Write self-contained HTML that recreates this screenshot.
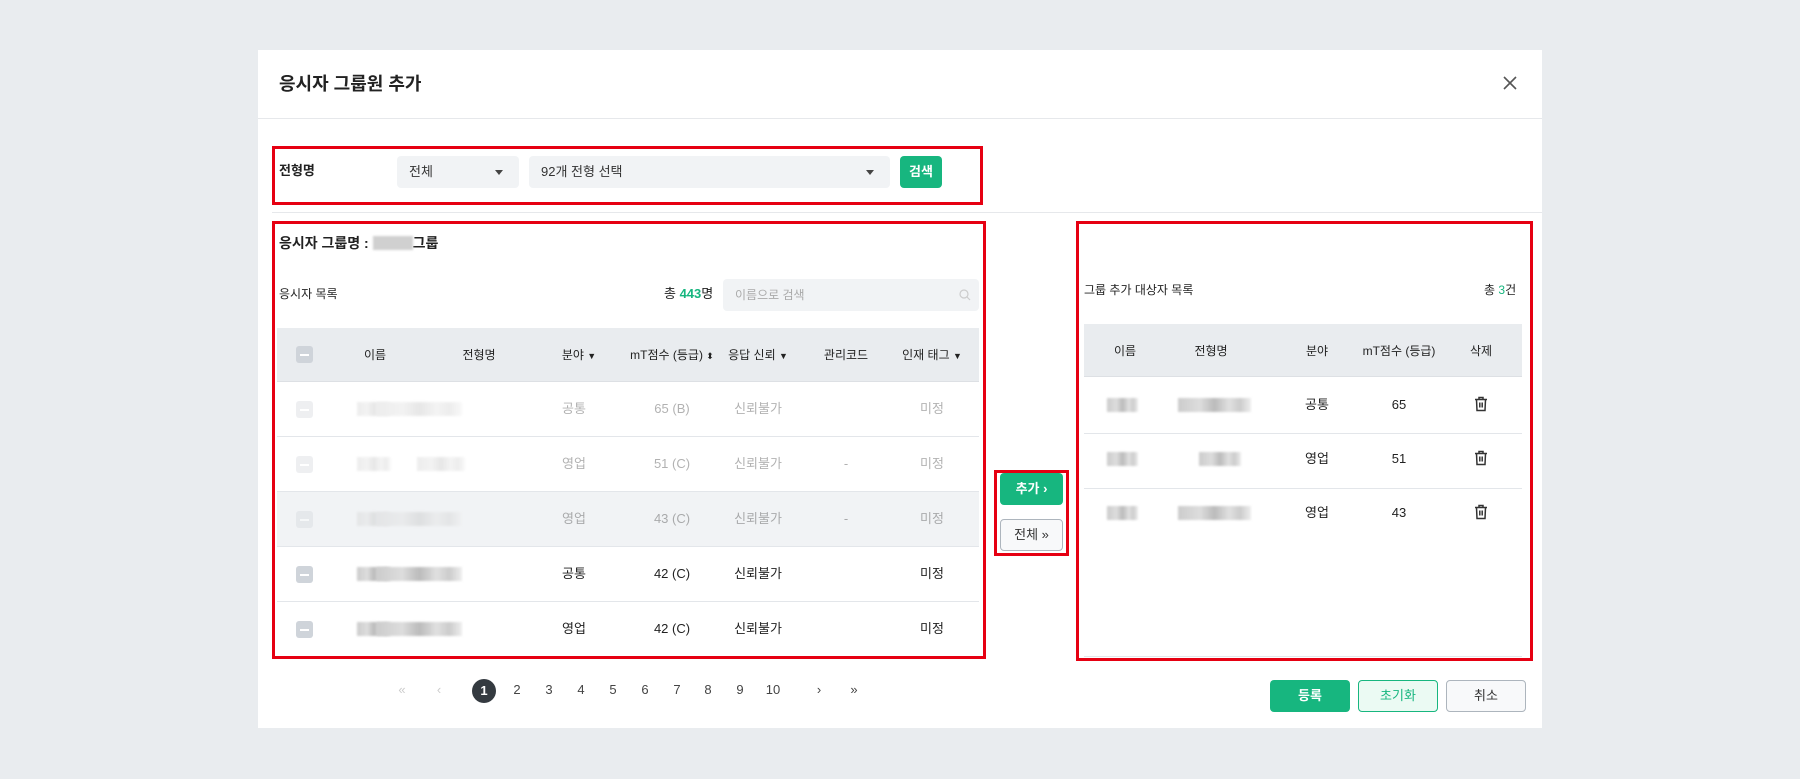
<!DOCTYPE html>
<html><head><meta charset="utf-8"><style>
*{box-sizing:border-box;margin:0;padding:0}
body{width:1800px;height:779px;background:#e9ecef;font-family:"Liberation Sans","Noto Sans CJK KR",sans-serif;color:#222;font-size:13px;line-height:16px;position:relative;overflow:hidden}
.a{position:absolute}
.modal{left:258px;top:50px;width:1284px;height:678px;background:#fff}
.red{border:3px solid #e60012}
.sel{background:#f1f3f5;border-radius:4px;height:32px;line-height:32px;padding-left:12px;font-size:13px;color:#333}
.tri{position:absolute;right:16px;top:14px;width:0;height:0;border-left:4px solid transparent;border-right:4px solid transparent;border-top:5px solid #444}
.c{position:absolute;transform:translateX(-50%);white-space:nowrap;text-align:center;line-height:16px}
.th{background:#e9ecef}
.blur{position:absolute;height:14px;background:linear-gradient(90deg,#ccc,#ddd 30%,#bbb 50%,#e0e0e0 70%,#ccc 85%,#eee);filter:blur(1px)}
.cb{position:absolute;width:17px;height:17px;background:#cfd4da;border-radius:3px}
.cb:after{content:"";position:absolute;left:4px;right:4px;top:8px;height:1.5px;background:#fff}
.row{position:absolute;left:0;width:702px;height:55px;border-bottom:1px solid #e3e6ea}
.fade{opacity:.35}
.btn{position:absolute;border-radius:4px;text-align:center;font-size:13px}
.pg{position:absolute;top:682px;font-size:13px;color:#444;transform:translateX(-50%)}
</style></head><body>
<div class="a modal"></div>
<div class="a" style="left:279px;top:73px;font-size:18px;line-height:22px;font-weight:bold">응시자 그룹원 추가</div>
<svg class="a" style="left:1502px;top:75px" width="16" height="16"><path d="M2 2L14 14M14 2L2 14" stroke="#555" stroke-width="1.6"/></svg>
<div class="a" style="left:258px;top:118px;width:1284px;height:1px;background:#e6e8eb"></div>

<div class="a red" style="left:272px;top:146px;width:711px;height:59px"></div>
<div class="a" style="left:279px;top:163px;font-size:13px;font-weight:bold">전형명</div>
<div class="a sel" style="left:397px;top:156px;width:122px">전체<span class="tri"></span></div>
<div class="a sel" style="left:529px;top:156px;width:361px">92개 전형 선택<span class="tri"></span></div>
<div class="btn" style="left:900px;top:156px;width:42px;height:32px;line-height:32px;background:#17b67f;color:#fff;font-weight:bold">검색</div>
<div class="a" style="left:272px;top:212px;width:1270px;height:1px;background:#e6e8eb"></div>

<div class="a red" style="left:272px;top:221px;width:714px;height:438px"></div>
<div class="a" style="left:279px;top:235px;font-size:14px;font-weight:bold">응시자 그룹명 : <span style="display:inline-block;width:40px;height:14px;background:#d0d0d0;vertical-align:-2px;filter:blur(1px)"></span>그룹</div>
<div class="a" style="left:279px;top:286px;font-size:12px">응시자 목록</div>
<div class="a" style="left:664px;top:286px;font-size:13px">총 <b style="color:#17b67f">443</b>명</div>
<div class="a" style="left:723px;top:279px;width:256px;height:32px;background:#f1f3f5;border-radius:4px;color:#aaa;font-size:12px;line-height:32px;padding-left:12px">이름으로 검색
<svg style="position:absolute;right:8px;top:10px" width="12" height="12"><circle cx="5" cy="5" r="4" fill="none" stroke="#ccc" stroke-width="1.2"/><path d="M8 8L11 11" stroke="#ccc" stroke-width="1.2"/></svg></div>

<div class="a" style="left:277px;top:328px;width:702px;height:330px">
 <div class="a th" style="left:0;top:0;width:702px;height:54px;border-bottom:1px solid #dde0e4"></div>
 <div class="cb" style="left:19px;top:18px"></div>
 <div class="c" style="left:98px;top:19px;font-size:12px">이름</div>
 <div class="c" style="left:202px;top:19px;font-size:12px">전형명</div>
 <div class="c" style="left:302px;top:19px;font-size:12px">분야 <span style="font-size:9px">▼</span></div>
 <div class="c" style="left:395px;top:19px;font-size:12px">mT점수 (등급) <span style="font-size:9px">⬍</span></div>
 <div class="c" style="left:481px;top:19px;font-size:12px">응답 신뢰 <span style="font-size:9px">▼</span></div>
 <div class="c" style="left:569px;top:19px;font-size:12px">관리코드</div>
 <div class="c" style="left:655px;top:19px;font-size:12px">인재 태그 <span style="font-size:9px">▼</span></div>

 <div class="row" style="top:54px"><div class="fade">
  <div class="cb" style="left:19px;top:19px"></div><div class="blur" style="left:80px;top:20px;width:34px"></div><div class="blur" style="left:100px;top:20px;width:85px"></div>
  <div class="c" style="left:297px;top:19px">공통</div><div class="c" style="left:395px;top:19px">65 (B)</div><div class="c" style="left:481px;top:19px">신뢰불가</div><div class="c" style="left:655px;top:19px">미정</div></div></div>
 <div class="row" style="top:109px"><div class="fade">
  <div class="cb" style="left:19px;top:19px"></div><div class="blur" style="left:80px;top:20px;width:34px"></div><div class="blur" style="left:140px;top:20px;width:48px"></div>
  <div class="c" style="left:297px;top:19px">영업</div><div class="c" style="left:395px;top:19px">51 (C)</div><div class="c" style="left:481px;top:19px">신뢰불가</div><div class="c" style="left:569px;top:19px">-</div><div class="c" style="left:655px;top:19px">미정</div></div></div>
 <div class="row" style="top:164px;background:#f1f3f5"><div class="fade">
  <div class="cb" style="left:19px;top:19px"></div><div class="blur" style="left:80px;top:20px;width:34px"></div><div class="blur" style="left:100px;top:20px;width:85px"></div>
  <div class="c" style="left:297px;top:19px">영업</div><div class="c" style="left:395px;top:19px">43 (C)</div><div class="c" style="left:481px;top:19px">신뢰불가</div><div class="c" style="left:569px;top:19px">-</div><div class="c" style="left:655px;top:19px">미정</div></div></div>
 <div class="row" style="top:219px">
  <div class="cb" style="left:19px;top:19px"></div><div class="blur" style="left:80px;top:20px;width:34px"></div><div class="blur" style="left:100px;top:20px;width:85px"></div>
  <div class="c" style="left:297px;top:19px">공통</div><div class="c" style="left:395px;top:19px">42 (C)</div><div class="c" style="left:481px;top:19px">신뢰불가</div><div class="c" style="left:655px;top:19px">미정</div></div>
 <div class="row" style="top:274px;border:none">
  <div class="cb" style="left:19px;top:19px"></div><div class="blur" style="left:80px;top:20px;width:34px"></div><div class="blur" style="left:100px;top:20px;width:85px"></div>
  <div class="c" style="left:297px;top:19px">영업</div><div class="c" style="left:395px;top:19px">42 (C)</div><div class="c" style="left:481px;top:19px">신뢰불가</div><div class="c" style="left:655px;top:19px">미정</div></div>
</div>

<div class="pg" style="left:402px;color:#ccc">«</div>
<div class="pg" style="left:439px;color:#ccc">‹</div>
<div class="a" style="left:472px;top:679px;width:24px;height:24px;border-radius:12px;background:#343a40;color:#fff;text-align:center;line-height:24px;font-weight:bold;font-size:13px">1</div>
<div class="pg" style="left:517px">2</div><div class="pg" style="left:549px">3</div><div class="pg" style="left:581px">4</div><div class="pg" style="left:613px">5</div><div class="pg" style="left:645px">6</div><div class="pg" style="left:677px">7</div><div class="pg" style="left:708px">8</div><div class="pg" style="left:740px">9</div><div class="pg" style="left:773px">10</div>
<div class="pg" style="left:819px">›</div><div class="pg" style="left:854px">»</div>

<div class="a red" style="left:994px;top:470px;width:75px;height:86px"></div>
<div class="btn" style="left:1000px;top:473px;width:63px;height:32px;line-height:32px;background:#17b67f;color:#fff;font-weight:bold">추가 ›</div>
<div class="btn" style="left:1000px;top:519px;width:63px;height:32px;line-height:30px;background:#f8f9fa;border:1px solid #adb5bd;color:#333">전체 »</div>

<div class="a red" style="left:1076px;top:221px;width:457px;height:440px"></div>
<div class="a" style="left:1084px;top:282px;font-size:12px">그룹 추가 대상자 목록</div>
<div class="a" style="left:1484px;top:282px;font-size:12px">총 <span style="color:#17b67f">3</span>건</div>
<div class="a th" style="left:1084px;top:324px;width:438px;height:53px;border-bottom:1px solid #dde0e4"></div>
<div class="c" style="left:1125px;top:343px;font-size:12px">이름</div>
<div class="c" style="left:1211px;top:343px;font-size:12px">전형명</div>
<div class="c" style="left:1317px;top:343px;font-size:12px">분야</div>
<div class="c" style="left:1399px;top:343px;font-size:12px">mT점수 (등급)</div>
<div class="c" style="left:1481px;top:343px;font-size:12px">삭제</div>
<div class="a" style="left:1084px;top:433px;width:438px;height:1px;background:#e3e6ea"></div>
<div class="a" style="left:1084px;top:488px;width:438px;height:1px;background:#e3e6ea"></div>
<div class="a" style="left:1084px;top:656px;width:438px;height:1px;background:#e3e6ea"></div>
<div class="blur" style="left:1107px;top:398px;width:31px"></div><div class="blur" style="left:1178px;top:398px;width:73px"></div>
<div class="blur" style="left:1107px;top:452px;width:31px"></div><div class="blur" style="left:1199px;top:452px;width:42px"></div>
<div class="blur" style="left:1107px;top:506px;width:31px"></div><div class="blur" style="left:1178px;top:506px;width:73px"></div>
<div class="c" style="left:1317px;top:397px">공통</div><div class="c" style="left:1399px;top:397px">65</div>
<div class="c" style="left:1317px;top:451px">영업</div><div class="c" style="left:1399px;top:451px">51</div>
<div class="c" style="left:1317px;top:505px">영업</div><div class="c" style="left:1399px;top:505px">43</div>
<svg class="a" style="left:1474px;top:396px" width="14" height="16"><path d="M1 3.5H13M5 3.5V1.5H9V3.5M2.5 3.5L3 14.5H11L11.5 3.5M5.8 6.5V11.5M8.2 6.5V11.5" fill="none" stroke="#333" stroke-width="1.5"/></svg>
<svg class="a" style="left:1474px;top:450px" width="14" height="16"><path d="M1 3.5H13M5 3.5V1.5H9V3.5M2.5 3.5L3 14.5H11L11.5 3.5M5.8 6.5V11.5M8.2 6.5V11.5" fill="none" stroke="#333" stroke-width="1.5"/></svg>
<svg class="a" style="left:1474px;top:504px" width="14" height="16"><path d="M1 3.5H13M5 3.5V1.5H9V3.5M2.5 3.5L3 14.5H11L11.5 3.5M5.8 6.5V11.5M8.2 6.5V11.5" fill="none" stroke="#333" stroke-width="1.5"/></svg>

<div class="btn" style="left:1270px;top:680px;width:80px;height:32px;line-height:32px;background:#17b67f;color:#fff;font-weight:bold">등록</div>
<div class="btn" style="left:1358px;top:680px;width:80px;height:32px;line-height:30px;background:#ebfaf3;border:1px solid #17b67f;color:#17b67f">초기화</div>
<div class="btn" style="left:1446px;top:680px;width:80px;height:32px;line-height:30px;background:#f8f9fa;border:1px solid #adb5bd;color:#333">취소</div>
</body></html>
